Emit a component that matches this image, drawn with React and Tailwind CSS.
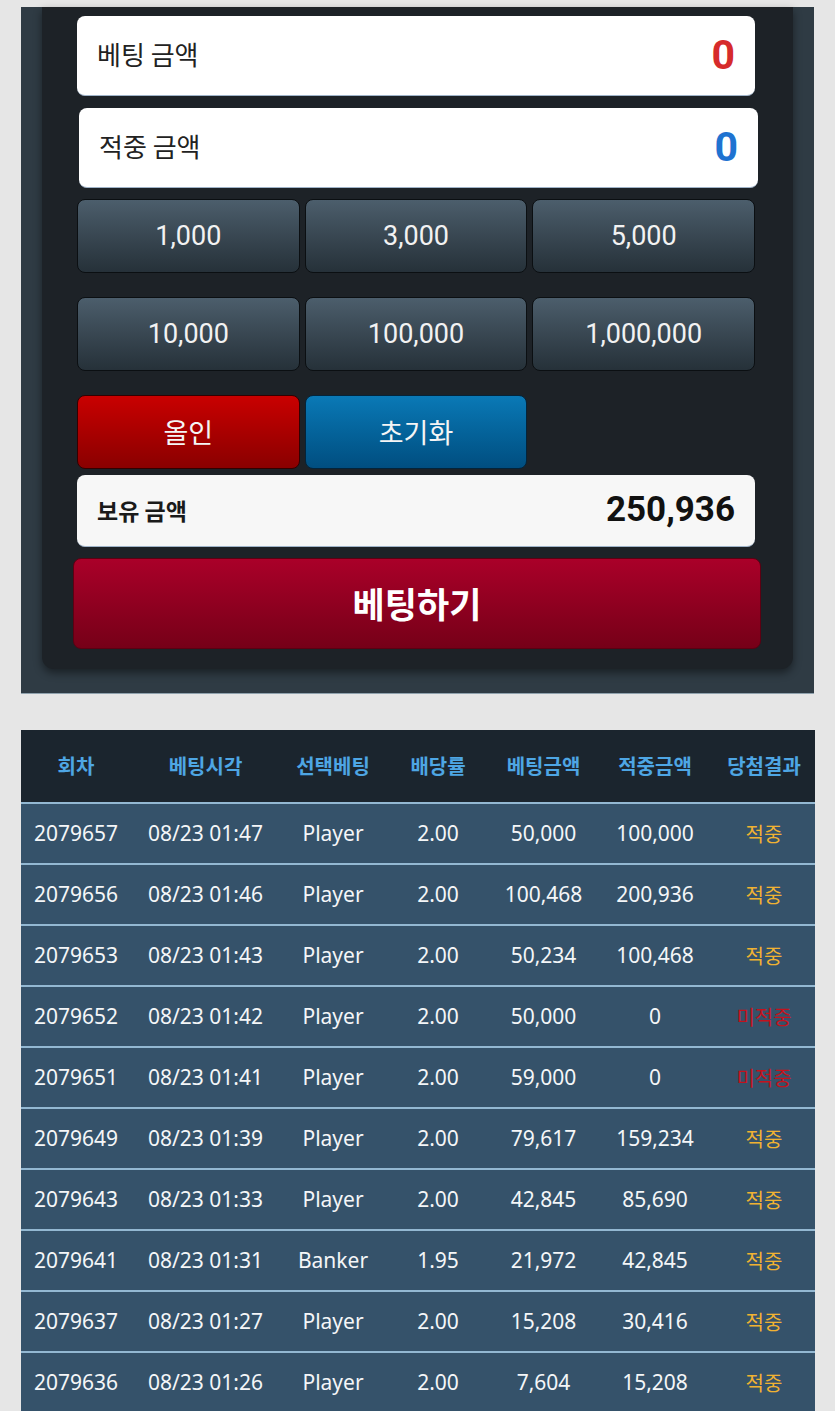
import React from "react";

const AMOUNTS = ["1,000", "3,000", "5,000", "10,000", "100,000", "1,000,000"];

const ROWS = [
  ["2079657", "08/23 01:47", "Player", "2.00", "50,000", "100,000", "적중"],
  ["2079656", "08/23 01:46", "Player", "2.00", "100,468", "200,936", "적중"],
  ["2079653", "08/23 01:43", "Player", "2.00", "50,234", "100,468", "적중"],
  ["2079652", "08/23 01:42", "Player", "2.00", "50,000", "0", "미적중"],
  ["2079651", "08/23 01:41", "Player", "2.00", "59,000", "0", "미적중"],
  ["2079649", "08/23 01:39", "Player", "2.00", "79,617", "159,234", "적중"],
  ["2079643", "08/23 01:33", "Player", "2.00", "42,845", "85,690", "적중"],
  ["2079641", "08/23 01:31", "Banker", "1.95", "21,972", "42,845", "적중"],
  ["2079637", "08/23 01:27", "Player", "2.00", "15,208", "30,416", "적중"],
  ["2079636", "08/23 01:26", "Player", "2.00", "7,604", "15,208", "적중"],
];

const HEADERS = ["회차", "베팅시각", "선택베팅", "배당률", "베팅금액", "적중금액", "당첨결과"];
const WIDTHS = ["w-[110px]", "w-[149px]", "w-[106px]", "w-[104px]", "w-[107px]", "w-[116px]", "w-[102px]"];

const AmountButton = ({ label }) => (
  <div className="h-[74px] rounded-[8px] border border-[#0b0f12] bg-gradient-to-b from-[#4c5e6c] to-[#263139] flex items-center justify-center text-[27px] text-[#f2f2f2] font-['Roboto','Noto_Sans_CJK_KR',sans-serif] cursor-pointer">
    {label}
  </div>
);

const App = () => {
  return (
    <div className="min-h-screen bg-[#e6e6e6] pt-[7px] font-['Noto_Sans','Noto_Sans_CJK_KR',sans-serif]">
      {/* 베팅 패널 */}
      <div className="mx-[21px] bg-[#2f3b44] pb-[24px] border-b border-[#8fa1ad]">
        <div className="mx-[21px] bg-[#1d2227] rounded-b-[12px] shadow-[0_4px_8px_rgba(0,0,0,0.45)] pl-[35px] pr-[38px] pt-[9px] pb-[20px] font-['Noto_Sans_CJK_KR',sans-serif]">
          <div className="h-[80px] bg-white rounded-[8px] border-b border-[#9fb3c8] flex items-center justify-between pl-[20px] pr-[20px]">
            <span className="text-[26px] text-[#222] -mt-[4px]">베팅 금액</span>
            <span className="text-[41px] font-bold text-[#d62b2b] font-['Roboto',sans-serif]">0</span>
          </div>
          <div className="h-[80px] mt-[12px] ml-[2px] -mr-[3px] bg-white rounded-[8px] border-b border-[#9fb3c8] flex items-center justify-between pl-[20px] pr-[20px]">
            <span className="text-[26px] text-[#222] -mt-[4px]">적중 금액</span>
            <span className="text-[41px] font-bold text-[#1f73d1] font-['Roboto',sans-serif]">0</span>
          </div>

          <div className="grid grid-cols-3 gap-x-[5px] gap-y-[24px] mt-[11px]">
            {AMOUNTS.map((a) => (
              <AmountButton key={a} label={a} />
            ))}
            <div className="h-[74px] rounded-[8px] border border-[#330000] bg-gradient-to-b from-[#c90000] to-[#8a0000] flex items-center justify-center text-[27px] text-[#f5f5f5]">
              올인
            </div>
            <div className="h-[74px] rounded-[8px] border border-[#04243a] bg-gradient-to-b from-[#0a79b6] to-[#014e80] flex items-center justify-center text-[27px] text-[#f5f5f5]">
              초기화
            </div>
          </div>

          <div className="h-[72px] mt-[6px] bg-[#f7f7f7] rounded-[8px] border-b border-[#9fb3c8] flex items-center justify-between pl-[20px] pr-[20px]">
            <span className="text-[23px] font-bold text-[#1a1a1a]">보유 금액</span>
            <span className="text-[35px] font-bold text-[#111] font-['Roboto',sans-serif]">250,936</span>
          </div>

          <div className="h-[91px] mt-[11px] -ml-[4px] -mr-[6px] rounded-[8px] border border-[#5c0012] bg-gradient-to-b from-[#aa0029] to-[#760018] flex items-center justify-center text-[35px] font-bold text-white cursor-pointer">
            베팅하기
          </div>
        </div>
      </div>

      {/* 베팅 내역 */}
      <div className="mx-[21px] mt-[36px]">
        <table className="w-full table-fixed border-collapse text-center">
          <thead>
            <tr className="bg-[#1b252e] border-b-2 border-[#93b8d2]">
              {HEADERS.map((h, i) => (
                <th
                  key={h}
                  className={`${WIDTHS[i]} h-[73px] text-[20px] font-bold text-[#4ea6e4] font-['Noto_Sans_CJK_KR',sans-serif]`}
                >
                  {h}
                </th>
              ))}
            </tr>
          </thead>
          <tbody>
            {ROWS.map((r) => (
              <tr key={r[0]} className="bg-[#35526a] border-b-2 border-[#93b8d2]">
                {r.slice(0, 6).map((c, i) => (
                  <td key={i} className="h-[61px] text-[21px] text-[#f4f6f8] whitespace-nowrap">
                    {c}
                  </td>
                ))}
                <td
                  className={`h-[61px] text-[20px] font-['Noto_Sans_CJK_KR',sans-serif] ${
                    r[6] === "적중" ? "text-[#f0b232]" : "text-[#c3121d]"
                  }`}
                >
                  {r[6]}
                </td>
              </tr>
            ))}
          </tbody>
        </table>
      </div>
    </div>
  );
};

export default App;
